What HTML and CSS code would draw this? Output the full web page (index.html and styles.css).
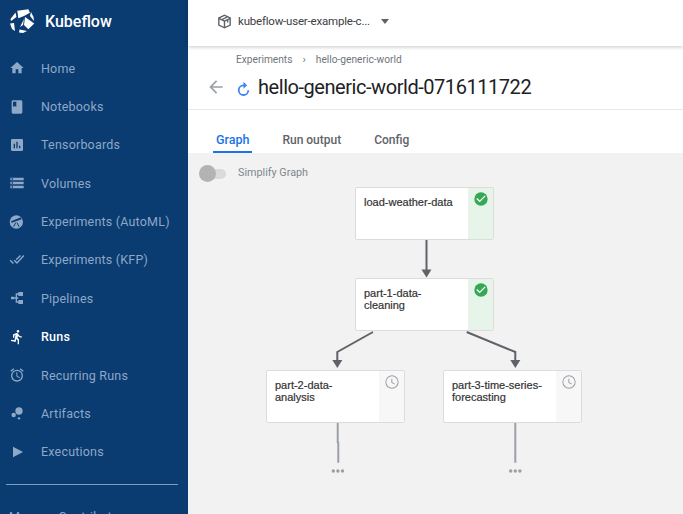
FILE: index.html
```html
<!DOCTYPE html>
<html lang="en">
<head>
<meta charset="utf-8">
<title>Kubeflow</title>
<link rel="stylesheet" href="styles.css">
</head>
<body>
<div class="app">
  <aside class="sidebar">
    <div class="brand">
      <svg class="logo" viewBox="9 8 26 26"><g fill="#fff">
        <path d="M17.300 10.700L28.300 9.300L30 12.700L24 16L18.300 18.300Z"/>
        <path d="M25 17L34.300 23.500L28.300 29.300L24 25Z"/>
        <path d="M20 27L24 19L23 25Z"/>
        <path d="M15.500 12.500L16.500 17L11 21L10.500 19Z"/>
        <path d="M10 23.500L14 23L15 31L12 29Z"/>
        <path d="M19.500 29.500L27 31L23 33L19 32.500Z"/>
        <path d="M31 12L33.500 17L34 21L30 16Z"/>
      </g></svg>
      <span class="brand-name">Kubeflow</span>
    </div>
    <nav class="nav">
      <a class="nav-item"><svg class="ico" viewBox="0 0 24 24"><path d="M10 20v-6h4v6h5v-8h3L12 3 2 12h3v8z"/></svg><span>Home</span></a>
      <a class="nav-item"><svg class="ico" viewBox="0 0 24 24"><path d="M18 2H6a2 2 0 0 0-2 2v16a2 2 0 0 0 2 2h12a2 2 0 0 0 2-2V4a2 2 0 0 0-2-2zM6 4h5v8l-2.500-1.500L6 12z"/></svg><span>Notebooks</span></a>
      <a class="nav-item"><svg class="ico" viewBox="0 0 24 24"><path d="M19 3H5a2 2 0 0 0-2 2v14a2 2 0 0 0 2 2h14a2 2 0 0 0 2-2V5a2 2 0 0 0-2-2zM9 17H7v-7h2zm4 0h-2V7h2zm4 0h-2v-4h2z"/></svg><span>Tensorboards</span></a>
      <a class="nav-item"><svg class="ico" viewBox="0 0 24 24"><path d="M2 20h20v-4H2zm2-3h2v2H4zM2 4v4h20V4zm4 3H4V5h2zm-4 7h20v-4H2zm2-3h2v2H4z"/></svg><span>Volumes</span></a>
      <a class="nav-item"><svg class="ico" viewBox="0 0 24 24"><circle cx="11" cy="12" r="10"/><path d="M3 11l15-6 1 3-15 5z" fill="#0a3b71"/><path d="M10 13l-3 6M12 13l3 6" stroke="#0a3b71" stroke-width="1.500"/></svg><span>Experiments (AutoML)</span></a>
      <a class="nav-item"><svg class="ico" viewBox="0 0 24 24"><path d="M1 13l5 5 1.500-1.500-5-5zM7 13l5 5L23 6l-1.500-1.500L12 15l-3.500-3.500zM18 6l-1.500-1.500L10 11l1.500 1.500z"/></svg><span>Experiments (KFP)</span></a>
      <a class="nav-item"><svg class="ico" viewBox="0 0 24 24"><path d="M14 3h7v6h-7V7h-2v4h2v2h-2v4h2v-2h7v6h-7v-2h-4v-6H8v1H3v-4h5v1h2V5h4z"/></svg><span>Pipelines</span></a>
      <a class="nav-item active"><svg class="ico" viewBox="0 0 24 24"><path d="M13.490 5.480c1.100 0 2-.9 2-2s-.9-2-2-2-2 .9-2 2 .9 2 2 2zm-3.600 13.900l1-4.400 2.100 2v6h2v-7.500l-2.100-2 .6-3c1.300 1.500 3.300 2.500 5.500 2.500v-2c-1.900 0-3.500-1-4.300-2.400l-1-1.600c-.4-.6-1-1-1.700-1-.3 0-.5.100-.8.100l-5.200 2.200v4.700h2v-3.400l1.800-.7-1.600 8.100-4.900-1-.4 2 7 1.400z"/></svg><span>Runs</span></a>
      <a class="nav-item"><svg class="ico" viewBox="0 0 24 24"><path d="M22 5.700l-4.600-3.900-1.300 1.500 4.600 3.900zM7.900 3.400L6.600 1.900 2 5.700l1.300 1.500zM12.500 8H11v6l4.700 2.900.8-1.200-4-2.400zM12 4a9 9 0 1 0 0 18 9 9 0 0 0 0-18zm0 16a7 7 0 1 1 0-14 7 7 0 0 1 0 14z"/></svg><span>Recurring Runs</span></a>
      <a class="nav-item"><svg class="ico" viewBox="0 0 24 24"><circle cx="15" cy="9" r="5.500"/><circle cx="7" cy="15" r="3.300"/><circle cx="15" cy="20" r="1.800"/></svg><span>Artifacts</span></a>
      <a class="nav-item"><svg class="ico" viewBox="0 0 24 24"><path d="M6 4l15 8-15 8z"/></svg><span>Executions</span></a>
    </nav>
    <div class="nav-divider"></div>
    <div class="nav-extra">Manage Contributors</div>
  </aside>
  <main class="main">
    <header class="topbar">
      <svg class="box-ico" viewBox="0 0 24 24"><path d="M12 2L3 6.500v11L12 22l9-4.500v-11zM12 4.200l2.300 1.200L8 8.600 5.800 7.500zM11 19.500l-6-3V9.100l6 3zm1-9.100L10 9.400l6.400-3.100 2 1zm7 6.100l-6 3v-7.400l2.500-1.200v3l2-1V9.900l1.500-.8z"/></svg>
      <span class="ns-name">kubeflow-user-example-c...</span>
      <span class="caret"></span>
    </header>
    <section class="page-head">
      <div class="crumbs"><span>Experiments</span><span class="crumb-sep">›</span><span>hello-generic-world</span></div>
      <div class="title-row">
        <svg class="back" viewBox="0 0 24 24"><path d="M20 11H7.800l5.600-5.600L12 4l-8 8 8 8 1.400-1.400L7.800 13H20z"/></svg>
        <svg class="status" viewBox="0 0 24 24"><path d="M12 5V1l5 5-5 5V7.500a5.500 5.500 0 1 0 5.500 5.500H20a8 8 0 1 1-8-8z"/></svg>
        <h1 class="title">hello-generic-world-0716111722</h1>
      </div>
    </section>
    <div class="tabs">
      <span class="tab tab-active">Graph</span>
      <span class="tab">Run output</span>
      <span class="tab">Config</span>
    </div>
    <section class="graph">
      <div class="toggle"><span class="toggle-track"></span><span class="toggle-thumb"></span></div>
      <span class="toggle-label">Simplify Graph</span>
      <svg class="edges" viewBox="0 0 495 361" width="495" height="361">
        <g fill="none" stroke="#5f6368" stroke-width="2">
          <path d="M238.500 86V118"/>
          <path d="M185 179L149.300 199V210"/>
          <path d="M278.700 179L327.300 199V210"/>
        </g>
        <g fill="#5f6368">
          <path d="M233.500 116.500h10l-5 8z"/>
          <path d="M144.300 207h10l-5 8z"/>
          <path d="M322.300 207h10l-5 8z"/>
        </g>
        <g fill="none" stroke="#9aa0a6" stroke-width="2">
          <path d="M149.700 270V290"/><path d="M150.300 289V309.700"/><path d="M327.300 270V309.700"/>
        </g>
        <g fill="#9aa0a6">
          <circle cx="145.300" cy="318" r="1.700"/><circle cx="149.900" cy="318" r="1.700"/><circle cx="154.500" cy="318" r="1.700"/>
          <circle cx="322.700" cy="318" r="1.700"/><circle cx="327.300" cy="318" r="1.700"/><circle cx="331.900" cy="318" r="1.700"/>
        </g>
      </svg>
      <div class="node node-a">
        <div class="node-name">load-weather-data</div>
        <div class="node-side ok"><svg viewBox="0 0 24 24"><path fill="#34a853" d="M12 2a10 10 0 1 0 0 20 10 10 0 0 0 0-20z"/><path fill="#fff" d="M10 17l-5-5 1.400-1.400 3.600 3.600 7.600-7.600L19 8z"/></svg></div>
      </div>
      <div class="node node-b">
        <div class="node-name">part-1-data-<br>cleaning</div>
        <div class="node-side ok"><svg viewBox="0 0 24 24"><path fill="#34a853" d="M12 2a10 10 0 1 0 0 20 10 10 0 0 0 0-20z"/><path fill="#fff" d="M10 17l-5-5 1.400-1.400 3.600 3.600 7.600-7.600L19 8z"/></svg></div>
      </div>
      <div class="node node-c">
        <div class="node-name">part-2-data-<br>analysis</div>
        <div class="node-side wait"><svg viewBox="0 0 24 24"><path fill="#9aa0a6" d="M12 2a10 10 0 1 0 0 20 10 10 0 0 0 0-20zm0 18.500a8.500 8.500 0 1 1 0-17 8.500 8.500 0 0 1 0 17zM12.500 7H11v6l4.800 2.900.7-1.200-4-2.400z"/></svg></div>
      </div>
      <div class="node node-d">
        <div class="node-name">part-3-time-series-<br>forecasting</div>
        <div class="node-side wait"><svg viewBox="0 0 24 24"><path fill="#9aa0a6" d="M12 2a10 10 0 1 0 0 20 10 10 0 0 0 0-20zm0 18.500a8.500 8.500 0 1 1 0-17 8.500 8.500 0 0 1 0 17zM12.500 7H11v6l4.800 2.900.7-1.200-4-2.400z"/></svg></div>
      </div>
    </section>
  </main>
</div>
</body>
</html>
```

FILE: styles.css
```css
* { box-sizing: border-box; }
html, body { margin: 0; height: 100%; overflow: hidden; }
body { font-family: Roboto, "Liberation Sans", sans-serif; background: #fff; color: #202124; }
.app { display: flex; height: 514px; width: 683px; overflow: hidden; }

.sidebar { width: 188px; flex: none; background: #0a3b71; color: #fff; display: flex; flex-direction: column; overflow: hidden; }
.brand { height: 48px; display: flex; align-items: center; padding: 0 0 6px 9px; flex: none; }
.logo { width: 26px; height: 26px; flex: none; }
.brand-name { margin-left: 10px; font-size: 16px; font-weight: 500; }
.nav { display: flex; flex-direction: column; padding-top: 1px; }
.nav-item { height: 38.36px; display: flex; align-items: center; padding-left: 9px; color: #8ea8c7; font-size: 12.500px; font-weight: 400; letter-spacing: 0.2px; }
.nav-item span { margin-left: 16px; }
.nav-item.active { color: #fff; font-weight: 500; }
.ico { width: 16px; height: 16px; fill: currentColor; flex: none; }
.nav-divider { height: 1px; margin: 13px 10px 0 6px; background: #7f9cbe; flex: none; }
.nav-extra { margin: 24px 0 0 9px; color: #8ea8c7; font-size: 12.500px; letter-spacing: 0.2px; white-space: nowrap; }

.main { flex: 1; min-width: 0; display: flex; flex-direction: column; }
.topbar { height: 46px; flex: none; display: flex; align-items: center; padding-left: 28px; padding-bottom: 5px; box-shadow: 0 1px 4px rgba(0,0,0,.22); position: relative; }
.box-ico { width: 17px; height: 17px; fill: #5f6368; flex: none; margin-top: 2px; }
.ns-name { margin-left: 5px; font-size: 11.500px; color: #3c4043; letter-spacing: -0.2px; }
.caret { margin-left: 11px; width: 0; height: 0; border-left: 4.500px solid transparent; border-right: 4.500px solid transparent; border-top: 5px solid #5f6368; margin-top: 1px; }

.page-head { height: 64px; flex: none; border-bottom: 1px solid #e8e8e8; }
.crumbs { display: flex; align-items: center; padding: 7px 0 0 48px; font-size: 10.200px; color: #70757a; height: 20px; }
.crumb-sep { margin: 0 10px; font-size: 11px; }
.title-row { display: flex; align-items: center; height: 32px; padding-left: 18px; margin-top: 5px; }
.back { width: 20px; height: 20px; fill: #9aa0a6; flex: none; }
.status { width: 17px; height: 17px; fill: #3b82f6; margin: 4px 0 0 8.500px; flex: none; }
.title { margin: 0 0 0 6.500px; font-size: 20px; font-weight: 400; letter-spacing: -0.45px; color: #202124; white-space: nowrap; }

.tabs { height: 43px; flex: none; display: flex; align-items: flex-end; padding-left: 25px; gap: 27px; }
.tab { height: 23px; padding: 0 3px; font-size: 12px; font-weight: 500; color: #5f6368; line-height: 20px; }
.tab-active { font-size: 12.500px; color: #1a73e8; border-bottom: 2px solid #1a73e8; }

.graph { flex: 1; background: #f2f2f2; position: relative; overflow: hidden; }
.toggle { position: absolute; left: 11px; top: 12px; width: 27px; height: 17px; }
.toggle-track { position: absolute; left: 4px; top: 3.500px; width: 23px; height: 10px; border-radius: 5px; background: #dadada; }
.toggle-thumb { position: absolute; left: 0; top: 0; width: 17px; height: 17px; border-radius: 50%; background: #b3b3b3; }
.toggle-label { position: absolute; left: 50px; top: 13px; font-size: 10.800px; color: #80868b; }
.edges { position: absolute; left: 0; top: 0; }
.node { position: absolute; width: 139px; height: 53px; background: #fff; border: 1px solid #dcdcdc; border-radius: 2px; display: flex; justify-content: space-between; overflow: hidden; }
.node-name { padding: 8px 0 0 8px; font-size: 11px; line-height: 12px; color: #333; font-family: "Liberation Sans", sans-serif; -webkit-text-stroke: 0.2px #333; }
.node-side { width: 25px; height: 100%; display: flex; justify-content: center; padding-top: 3px; flex: none; }
.node-side svg { width: 16px; height: 16px; }
.ok { background: #e6f4ea; }
.wait { background: #f7f7f7; }
.node-a { left: 167px; top: 34px; }
.node-b { left: 167px; top: 125px; }
.node-c { left: 78px; top: 217px; }
.node-d { left: 255px; top: 217px; }
```
